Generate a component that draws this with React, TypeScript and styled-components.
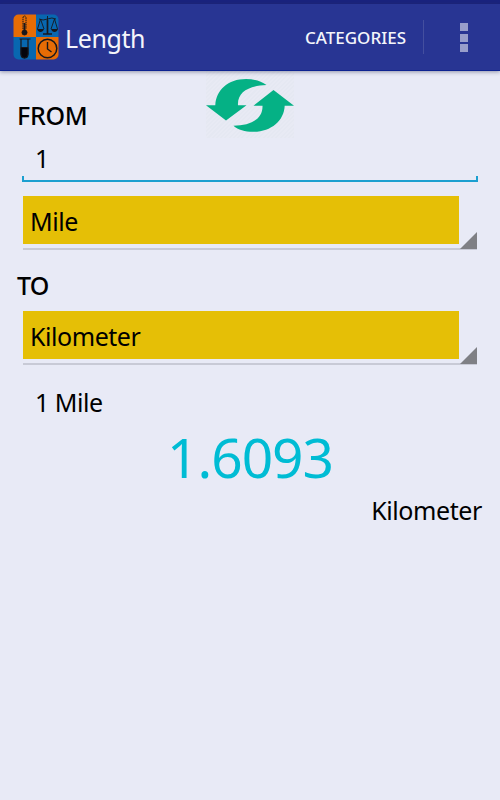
import React from "react";
import styled, { createGlobalStyle } from "styled-components";

const GlobalStyle = createGlobalStyle`
  * { box-sizing: border-box; }
  body { margin: 0; background: #e8eaf6; font-family: "Noto Sans", sans-serif; color: #000; }
`;

const Screen = styled.div`
  width: 500px;
  height: 800px;
  overflow: hidden;
  display: flex;
  flex-direction: column;
  background: #e8eaf6;
`;

const StatusStrip = styled.div`
  height: 4px;
  flex: none;
  background: #1a237e;
`;

const AppBar = styled.header`
  height: 67px;
  flex: none;
  display: flex;
  align-items: center;
  padding-left: 13px;
  background: #283593;
  border-bottom: 1px solid #0d2391;
  box-shadow: 0 1px 4px rgba(40, 45, 80, 0.45);
  z-index: 1;
  color: #f4f5fb;
`;

const Title = styled.h1`
  margin: 1px 0 0 6px;
  font-size: 25px;
  font-weight: 400;
  line-height: 36px;
  letter-spacing: -0.4px;
  flex: 1;
`;

const CategoriesButton = styled.button`
  border: 0;
  padding: 0;
  width: 101px;
  margin-top: 2px;
  background: none;
  color: inherit;
  font: 500 17px/24px "Noto Sans", sans-serif;
  letter-spacing: 0;
  white-space: nowrap;
  text-align: left;
`;

const Divider = styled.div`
  width: 1px;
  height: 34px;
  margin-left: 17px;
  background: #444f9f;
`;

const OverflowButton = styled.div`
  width: 76px;
  display: flex;
  flex-direction: column;
  align-items: center;
  gap: 2.5px;
  padding: 1px 0 0 3px;
`;

const Dot = styled.i`
  width: 8px;
  height: 8px;
  background: #989ecb;
`;

const FromRow = styled.div`
  height: 67px;
  flex: none;
  display: grid;
  grid-template-columns: 188px 88px 1fr;
  padding-left: 18px;
`;

const Label = styled.div<{ $top: number; $spacing?: number }>`
  margin: ${(p) => p.$top}px 0 0 -1px;
  height: 36px;
  flex: none;
  font-size: 25px;
  font-weight: 500;
  line-height: 36px;
  letter-spacing: ${(p) => p.$spacing ?? 0}px;
`;

const SwapButton = styled.div`
  background: repeating-linear-gradient(135deg, #e5e8f2 0 1.5px, #e8eaf4 1.5px 3px);
  svg { display: block; }
`;

const ValueField = styled.div`
  height: 44px;
  flex: none;
  margin: 0 22px;
  display: flex;
  flex-direction: column;
`;

const ValueText = styled.div`
  height: 38px;
  padding-left: 13px;
  font-size: 25px;
  line-height: 41px;
`;

const FieldEdge = styled.div`
  height: 6px;
  border: 2px solid #1b9fd0;
  border-top: 0;
`;

const Spinner = styled.div`
  height: 54px;
  flex: none;
  margin: 0 23px;
  display: grid;
  grid-template-columns: 436px 1fr;
  align-items: end;
  border-bottom: 2px solid #c8cad6;
`;

const SpinnerValue = styled.div`
  height: 48px;
  align-self: start;
  padding-left: 7px;
  background: #e5bf06;
  font-size: 25px;
  line-height: 50px;
  letter-spacing: -0.45px;
`;

const Corner = styled.div`
  width: 17px;
  height: 17px;
  margin: 0 0 -1px 1px;
  background: #7f8085;
  clip-path: polygon(100% 0, 100% 100%, 0 100%);
`;

const ToRow = styled.div`
  height: 61px;
  flex: none;
  padding-left: 18px;
  display: flex;
`;

const Result = styled.section`
  display: flex;
  flex-direction: column;
  padding: 19px 18px 0;
`;

const SourceText = styled.div`
  padding-left: 17px;
  font-size: 25px;
  line-height: 36px;
  letter-spacing: -0.5px;
`;

const ResultValue = styled.div`
  height: 72px;
  text-align: center;
  font-size: 55px;
  line-height: 74px;
  letter-spacing: -1px;
  color: #00bcd4;
`;

const ResultUnit = styled.div`
  text-align: right;
  font-size: 25px;
  line-height: 36px;
  letter-spacing: -0.4px;
`;

const Logo = () => (
  <svg width="46" height="46" viewBox="0 0 46 46">
    <clipPath id="logo-corners"><rect width="45" height="45" x=".5" y=".5" rx="5" /></clipPath>
    <g clipPath="url(#logo-corners)">
      <path fill="#e66c05" d="M0 0h23v23H0zM23 23h23v23H23z" />
      <path fill="#0867b0" d="M23 0h23v23H23zM0 23h23v23H0z" />
    </g>
    <g fill="none" stroke="#17171c" strokeWidth="1">
      <path d="M10 15V4q0-2 1.5-2T13 4v11" strokeDasharray="1.5 .7" />
      <path d="M11.5 9v9" strokeWidth="1.8" />
      <circle cx="11.5" cy="18.5" r="2.5" fill="#17171c" />
      <path d="M34.5 2v17M26 5q4 2 8.500 0t8.500 0M27.500 5l-3 10M27.500 5l3.500 10M41.500 5l-3.500 10M41.500 5l3 10" strokeWidth=".9" />
      <path d="M34.500 6v14M30 20h9" strokeWidth="1.700" />
      <path d="M24 15h7q-1 3-3.500 3T24 15zM38 15h7q-1 3-3.500 3T38 15z" fill="#17171c" stroke="none" />
      <path d="M6.500 25h11M8 25v15q0 4 3.500 4t3.500-4V25" strokeWidth="1.200" />
      <path d="M8 33.500h7V40q0 4-3.500 4T8 40z" fill="#05050c" />
      <circle cx="34.500" cy="34.500" r="9.300" strokeWidth="1.500" />
      <path d="M34.500 28v7l4 3" strokeWidth="1.400" />
    </g>
  </svg>
);

const SwapIcon = () => (
  <svg width="88" height="67" viewBox="206 71 88 67">
    <g fill="#05b185">
      <path d="M206 105.300H215.300C216 90 228 79 246 79C254 79 261 81 266.500 85C249 85.500 237 92 238 105.300H246.500L226 120.500Z" />
      <path d="M294 105.700H284.700C284 121 271 131.800 253 131.800C245 131.800 238 129.800 233.500 125.700C251 125.500 263 119 262.500 105.700H253.500L273.500 90Z" />
    </g>
  </svg>
);

const UnitSpinner = ({ unit }: { unit: string }) => (
  <Spinner>
    <SpinnerValue>{unit}</SpinnerValue>
    <Corner />
  </Spinner>
);

const Gap = styled.div`
  height: 14px;
  flex: none;
`;

export default function App() {
  return (
    <>
      <GlobalStyle />
      <Screen>
        <StatusStrip />
        <AppBar>
          <Logo />
          <Title>Length</Title>
          <CategoriesButton>CATEGORIES</CategoriesButton>
          <Divider />
          <OverflowButton><Dot /><Dot /><Dot /></OverflowButton>
        </AppBar>
        <FromRow>
          <Label $top={26} $spacing={-0.3}>FROM</Label>
          <SwapButton><SwapIcon /></SwapButton>
        </FromRow>
        <ValueField>
          <ValueText>1</ValueText>
          <FieldEdge />
        </ValueField>
        <Gap />
        <UnitSpinner unit="Mile" />
        <ToRow><Label $top={17} $spacing={-0.8}>TO</Label></ToRow>
        <UnitSpinner unit="Kilometer" />
        <Result>
          <SourceText>1 Mile</SourceText>
          <ResultValue>1.6093</ResultValue>
          <ResultUnit>Kilometer</ResultUnit>
        </Result>
      </Screen>
    </>
  );
}
